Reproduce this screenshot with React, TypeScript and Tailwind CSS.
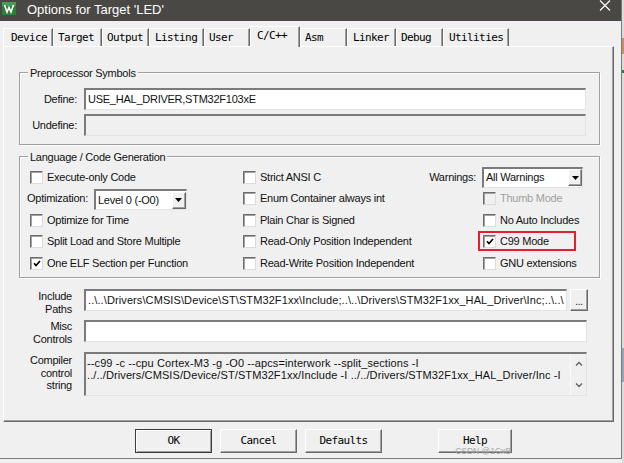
import React from "react";

const sans = "font-['Liberation_Sans',Arial,sans-serif] text-[11px] tracking-[-0.25px] text-[#111]";
const mono = "font-['DejaVu_Sans_Mono',monospace] text-[11px] tracking-[-0.6px] text-black";
const sunken =
  "border-t-2 border-l-2 border-r border-b border-t-[#7b7b7b] border-l-[#7b7b7b] border-r-[#e3e3e3] border-b-[#e3e3e3]";
const raised =
  "border border-t-white border-l-white border-r-[#696969] border-b-[#696969] shadow-[inset_-1px_-1px_0_#a0a0a0]";

const tabs = [
  { name: "Device", w: "w-[50px]", pl: "pl-[7px]" },
  { name: "Target", w: "w-[49px]", pl: "pl-[4px]" },
  { name: "Output", w: "w-[47px]", pl: "pl-[4px]" },
  { name: "Listing", w: "w-[55px]", pl: "pl-[5px]" },
  { name: "User", w: "w-[46px]", pl: "pl-[4px]" },
  { name: "C/C++", w: "w-[50px]", pl: "pl-[6px]", active: true },
  { name: "Asm", w: "w-[47px]", pl: "pl-[4px]" },
  { name: "Linker", w: "w-[49px]", pl: "pl-[5px]" },
  { name: "Debug", w: "w-[47px]", pl: "pl-[4px]" },
  { name: "Utilities", w: "w-[66px]", pl: "pl-[5px]" },
];

function Box({ checked, disabled }: { checked?: boolean; disabled?: boolean }) {
  return (
    <span
      className={`flex h-[13px] w-[13px] shrink-0 items-center justify-center border border-t-[#6d6d6d] border-l-[#6d6d6d] border-r-[#dcdcdc] border-b-[#dcdcdc] shadow-[inset_1px_1px_0_#a0a0a0] ${
        disabled ? "bg-[#f0f0f0]" : "bg-white"
      }`}
    >
      {checked && (
        <svg width="8" height="7" viewBox="0 0 8 7">
          <path d="M1 3.3l2 2.2L7 1" stroke="#000" strokeWidth="1.7" fill="none" />
        </svg>
      )}
    </span>
  );
}

function Check({ label, checked, disabled }: { label: string; checked?: boolean; disabled?: boolean }) {
  return (
    <label className="flex items-center gap-[4px] whitespace-nowrap">
      <Box checked={checked} disabled={disabled} />
      <span className={disabled ? "text-[#a0a0a0]" : ""}>{label}</span>
    </label>
  );
}

function Combo({ value, w }: { value: string; w: string }) {
  return (
    <div className={`flex h-[21px] ${w} items-center bg-white ${sunken}`}>
      <span className="flex-1 truncate pl-[2px]">{value}</span>
      <span className={`flex h-[17px] w-[14px] items-center justify-center bg-[#f0f0f0] ${raised}`}>
        <svg width="7" height="4" viewBox="0 0 7 4">
          <path d="M0 0h7L3.5 4z" fill="#000" />
        </svg>
      </span>
    </div>
  );
}

function Btn({ label, w, primary }: { label: string; w: string; primary?: boolean }) {
  return (
    <button
      type="button"
      className={`flex h-[24px] ${w} items-center justify-center bg-[#f0f0f0] ${mono} ${
        primary
          ? "border border-[#3c3c3c] shadow-[inset_1px_1px_0_#fff,inset_-1px_-1px_0_#a0a0a0]"
          : raised
      }`}
    >
      {label}
    </button>
  );
}

function Group({ title, h, className, children }: { title: string; h: string; className?: string; children: React.ReactNode }) {
  return (
    <div
      className={`relative ml-[15px] w-[581px] ${h} border border-[#a0a0a0] shadow-[1px_1px_0_#fff,inset_1px_1px_0_#fff] ${className ?? ""}`}
    >
      <span className="absolute -top-[7px] left-[8px] bg-[#f0f0f0] px-[2px] leading-[14px]">{title}</span>
      {children}
    </div>
  );
}

export default function App() {
  return (
    <div className={`flex h-[463px] w-[624px] overflow-hidden bg-[#f0f0f0] ${sans}`}>
      <div className="flex h-[459px] w-[622px] shrink-0 flex-col border-r border-b border-[#7a7a7a]">
        {/* title bar */}
        <div className="flex h-[21px] shrink-0 bg-[#4a4845]">
          <svg className="ml-[2px] mt-[2px]" width="14" height="13" viewBox="0 0 14 13">
            <rect width="14" height="13" fill="#2f7d3a" />
            <rect width="14" height="4" fill="#4a9a55" />
            <path d="M2.5 3l2.5 7 2-4.5L9 10l2.5-7" stroke="#fff" strokeWidth="1.6" fill="none" />
          </svg>
          <span className="ml-[11px] mt-[2px] font-['Liberation_Sans',Arial,sans-serif] text-[13px] leading-[16px] tracking-normal text-white">
            Options for Target 'LED'
          </span>
          <svg className="ml-auto mr-[10px]" width="12" height="11" viewBox="0 0 12 11">
            <path d="M1 0.5l10 10M11 0.5l-10 10" stroke="#fff" strokeWidth="1.1" />
          </svg>
        </div>

        <div className="flex flex-col pl-[3px]">
          {/* tabs */}
          <div className={`mt-[5px] flex h-[20px] items-end ${mono}`}>
            {tabs.map((t) =>
              t.active ? (
                <div
                  key={t.name}
                  className={`relative z-10 -mb-[1px] h-[21px] ${t.w} ${t.pl} border-t border-l border-r border-t-white border-l-white border-r-[#696969] bg-[#f0f0f0] leading-[18px] shadow-[inset_-1px_0_0_#a0a0a0]`}
                >
                  {t.name}
                </div>
              ) : (
                <div
                  key={t.name}
                  className={`h-[18px] ${t.w} ${t.pl} border-t border-l border-r border-t-white border-l-white border-r-[#696969] leading-[18px] shadow-[inset_-1px_0_0_#a0a0a0]`}
                >
                  {t.name}
                </div>
              )
            )}
          </div>

          {/* tab page */}
          <div className="flex h-[376px] w-[611px] flex-col border border-t-white border-l-white border-r-[#696969] border-b-[#696969] shadow-[inset_-1px_-1px_0_#a0a0a0]">
            <Group title="Preprocessor Symbols" h="h-[73px]" className="mt-[25px]">
              <div className="flex flex-col gap-[4px] pt-[15px]">
                <div className="flex items-center">
                  <span className="w-[57px] text-right">Define:</span>
                  <div className={`ml-[7px] flex h-[22px] w-[502px] items-center bg-white pl-[2px] ${sunken}`}>
                    USE_HAL_DRIVER,STM32F103xE
                  </div>
                </div>
                <div className="flex items-center">
                  <span className="w-[57px] text-right">Undefine:</span>
                  <div className={`ml-[7px] h-[22px] w-[502px] bg-[#f0f0f0] ${sunken}`} />
                </div>
              </div>
            </Group>

            <Group title="Language / Code Generation" h="h-[122px]" className="mt-[11px]">
              <div className="flex flex-col pt-[9px]">
                <div className="flex h-[22px] items-center">
                  <div className="w-[223px] pl-[10px]">
                    <Check label="Execute-only Code" />
                  </div>
                  <div className="w-[185px]">
                    <Check label="Strict ANSI C" />
                  </div>
                  <div className="flex items-center">
                    <span className="w-[48px] text-right">Warnings:</span>
                    <div className="ml-[6px]">
                      <Combo value="All Warnings" w="w-[101px]" />
                    </div>
                  </div>
                </div>
                <div className="flex h-[21px] items-center">
                  <div className="flex w-[223px] items-center pl-[7px]">
                    <span>Optimization:</span>
                    <div className="ml-[6px] mt-[2px]">
                      <Combo value="Level 0 (-O0)" w="w-[93px]" />
                    </div>
                  </div>
                  <div className="w-[185px]">
                    <Check label="Enum Container always int" />
                  </div>
                  <div className="pl-[55px]">
                    <Check label="Thumb Mode" disabled />
                  </div>
                </div>
                <div className="flex h-[22px] items-center">
                  <div className="w-[223px] pl-[10px]">
                    <Check label="Optimize for Time" />
                  </div>
                  <div className="w-[185px]">
                    <Check label="Plain Char is Signed" />
                  </div>
                  <div className="pl-[55px]">
                    <Check label="No Auto Includes" />
                  </div>
                </div>
                <div className="flex h-[21px] items-center">
                  <div className="w-[223px] pl-[10px]">
                    <Check label="Split Load and Store Multiple" />
                  </div>
                  <div className="w-[185px]">
                    <Check label="Read-Only Position Independent" />
                  </div>
                  <div className="relative flex h-full items-center pl-[55px]">
                    <Check label="C99 Mode" checked />
                    <span className="absolute left-[50px] top-0 h-[20px] w-[98px] border-2 border-[#e51f2b]" />
                  </div>
                </div>
                <div className="flex h-[22px] items-center">
                  <div className="w-[223px] pl-[10px]">
                    <Check label="One ELF Section per Function" checked />
                  </div>
                  <div className="w-[185px]">
                    <Check label="Read-Write Position Independent" />
                  </div>
                  <div className="pl-[55px]">
                    <Check label="GNU extensions" />
                  </div>
                </div>
              </div>
            </Group>

            {/* paths & controls */}
            <div className="ml-[15px] mt-[11px] flex flex-col leading-[13px]">
              <div className="flex h-[22px]">
                <div className="w-[53px] pt-[1px] text-right">
                  Include
                  <br />
                  Paths
                </div>
                <div
                  className={`ml-[12px] flex h-[22px] w-[483px] items-center overflow-hidden whitespace-nowrap bg-white pl-[2px] tracking-[0.1px] ${sunken}`}
                >
                  ..\..\Drivers\CMSIS\Device\ST\STM32F1xx\Include;..\..\Drivers\STM32F1xx_HAL_Driver\Inc;..\..\
                </div>
                <button
                  type="button"
                  className={`ml-[3px] flex h-[22px] w-[18px] items-end justify-center bg-[#f0f0f0] pb-[4px] text-[10px] leading-[8px] ${raised}`}
                >
                  ...
                </button>
              </div>
              <div className="mt-[9px] flex h-[22px]">
                <div className="w-[53px] text-right">
                  Misc
                  <br />
                  Controls
                </div>
                <div className={`ml-[12px] h-[22px] w-[503px] bg-white ${sunken}`} />
              </div>
              <div className="mt-[10px] flex">
                <div className="w-[53px] pt-[2px] text-right leading-[12.5px]">
                  Compiler
                  <br />
                  control
                  <br />
                  string
                </div>
                <div className={`ml-[12px] flex h-[44px] w-[503px] bg-[#f0f0f0] ${sunken}`}>
                  <div className="flex-1 overflow-hidden whitespace-nowrap pl-[1px] pt-[3px] leading-[12px] tracking-[0.1px]">
                    --c99 -c --cpu Cortex-M3 -g -O0 --apcs=interwork --split_sections -I
                    <br />
                    ../../Drivers/CMSIS/Device/ST/STM32F1xx/Include -I ../../Drivers/STM32F1xx_HAL_Driver/Inc -I
                  </div>
                  <div className="flex w-[16px] flex-col items-center justify-between border-l border-l-[#fafafa] py-[7px]">
                    <svg width="8" height="5" viewBox="0 0 8 5">
                      <path d="M1 4.5L4 1.5l3 3" stroke="#606060" strokeWidth="1.3" fill="none" />
                    </svg>
                    <svg width="8" height="5" viewBox="0 0 8 5">
                      <path d="M1 0.5L4 3.5l3-3" stroke="#606060" strokeWidth="1.3" fill="none" />
                    </svg>
                  </div>
                </div>
              </div>
            </div>
          </div>

          {/* dialog buttons */}
          <div className="mt-[7px] flex pl-[132px]">
            <Btn label="OK" w="w-[77px]" primary />
            <div className="ml-[8px]">
              <Btn label="Cancel" w="w-[77px]" />
            </div>
            <div className="ml-[8px]">
              <Btn label="Defaults" w="w-[77px]" />
            </div>
            <div className="relative ml-[56px]">
              <Btn label="Help" w="w-[74px]" />
              <span className="absolute bottom-[-3px] right-[1px] font-['Liberation_Sans',Arial,sans-serif] text-[8.5px] leading-[9px] tracking-normal text-[#a8a8a8]">
                CSDN @1CxB
              </span>
            </div>
          </div>
        </div>
      </div>

      {/* sliver of the window behind */}
      <div className="flex w-[2px] flex-col bg-[#dcdcdc]">
        <div className="mt-[38px] h-[16px] bg-[#c89060]" />
        <div className="mt-[16px] h-[3px] bg-[#2f7d3a]" />
        <div className="mt-[275px] h-[34px] bg-[#9aa6b8]" />
      </div>
    </div>
  );
}
